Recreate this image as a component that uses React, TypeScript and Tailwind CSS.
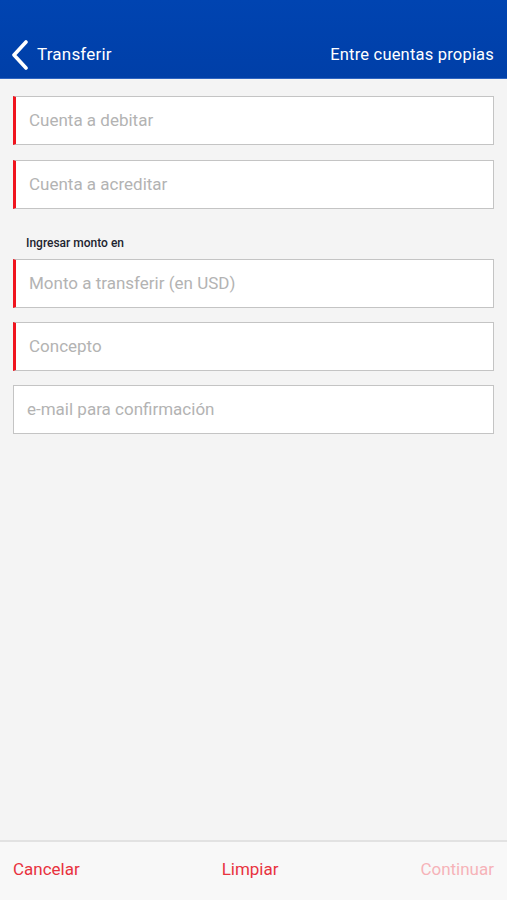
const fields = [
  { placeholder: "Cuenta a debitar", required: true },
  { placeholder: "Cuenta a acreditar", required: true },
  { placeholder: "Monto a transferir (en USD)", required: true, label: "Ingresar monto en" },
  { placeholder: "Concepto", required: true },
  { placeholder: "e-mail para confirmación", required: false },
];

const BackChevron = () => (
  <svg width="18" height="30" viewBox="0 0 18 30" fill="none">
    <polyline
      points="15,2 3,15 15,28"
      stroke="white"
      strokeWidth="3.6"
      strokeLinecap="round"
      strokeLinejoin="round"
    />
  </svg>
);

const App = () => {
  return (
    <div
      className="w-[507px] h-[900px] flex flex-col bg-[#f4f4f4]"
      style={{ fontFamily: "Roboto, 'Noto Sans', sans-serif" }}
    >
      <header className="h-[79px] shrink-0 bg-gradient-to-b from-[#0044b1] to-[#003fa8] flex flex-col justify-end border-b border-[#2f64c0]">
        <div className="h-[30px] mb-[8px] flex items-center justify-between pl-[11px] pr-[13px] text-white">
          <div className="flex items-center gap-[8px]">
            <BackChevron />
            <span className="text-[17px] tracking-[0.2px]">Transferir</span>
          </div>
          <span className="text-[16.5px] tracking-[0.2px]">Entre cuentas propias</span>
        </div>
      </header>

      <main className="flex-1 flex flex-col px-[13px] pt-[17px]">
        {fields.map((f, i) => (
          <div
            key={i}
            className={i === 0 ? "" : f.label ? "mt-[28px]" : i > 2 ? "mt-[14px]" : "mt-[15px]"}
          >
            {f.label && (
              <div className="text-[12px] font-medium text-[#1d2430] pl-[13px] mb-[10px] leading-none">
                {f.label}
              </div>
            )}
            <div
              className={
                "h-[49px] bg-white border border-[#c4c4c4] flex items-center pl-[13px] text-[17px] text-[#b3b3b3] " +
                (f.required ? "border-l-[3px] border-l-[#f0141e]" : "")
              }
            >
              {f.placeholder}
            </div>
          </div>
        ))}
      </main>

      <footer className="h-[60px] shrink-0 border-t-2 border-[#e2e2e2] bg-[#f8f8f8] flex items-center justify-between px-[13px] pb-[2px] text-[17px]">
        <span className="text-[#e8323e]">Cancelar</span>
        <span className="text-[#e8323e]">Limpiar</span>
        <span className="text-[#f6b3b8]">Continuar</span>
      </footer>
    </div>
  );
};

export default App;
